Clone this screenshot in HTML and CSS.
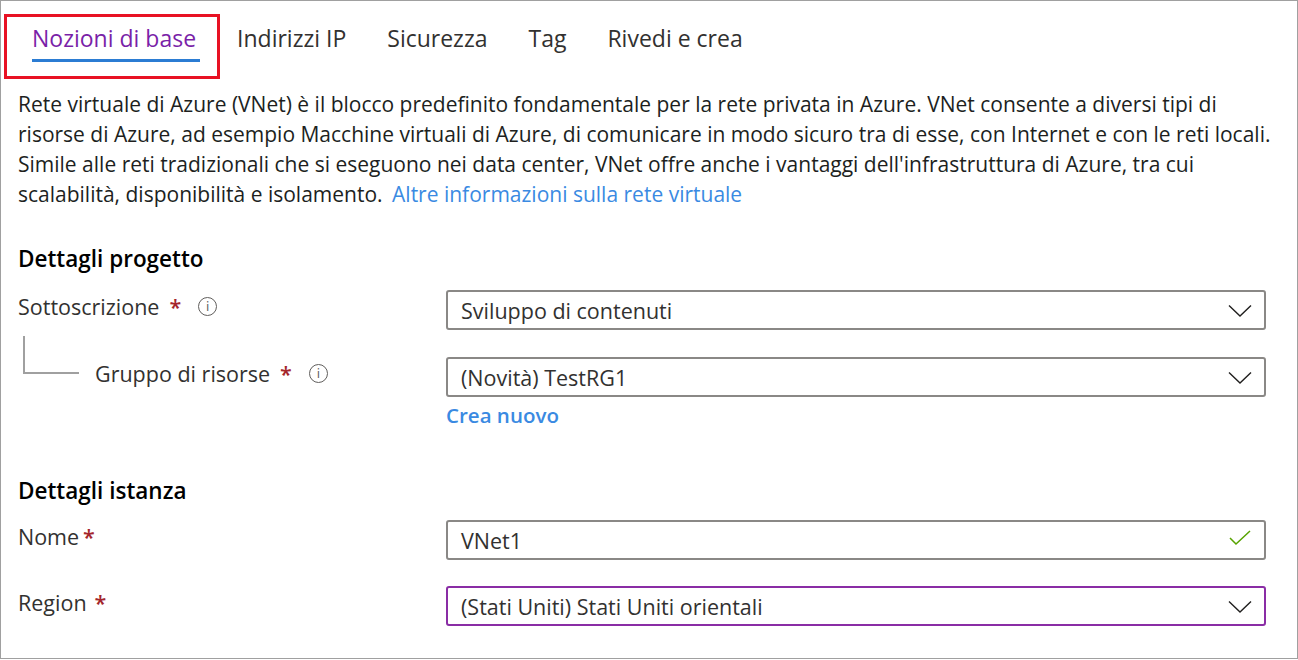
FILE: index.html
```html
<!DOCTYPE html>
<html lang="it">
<head>
<meta charset="utf-8">
<title>Crea rete virtuale</title>
<link rel="stylesheet" href="styles.css">
</head>
<body>
<div class="frame">
  <nav class="tabs">
    <div class="tab active">Nozioni di base</div>
    <div class="tab">Indirizzi IP</div>
    <div class="tab">Sicurezza</div>
    <div class="tab">Tag</div>
    <div class="tab">Rivedi e crea</div>
  </nav>

  <p class="intro">Rete virtuale di Azure (VNet) è il blocco predefinito fondamentale per la rete privata in Azure. VNet consente a diversi tipi di<br>risorse di Azure, ad esempio Macchine virtuali di Azure, di comunicare in modo sicuro tra di esse, con Internet e con le reti locali.<br>Simile alle reti tradizionali che si eseguono nei data center, VNet offre anche i vantaggi dell'infrastruttura di Azure, tra cui<br>scalabilità, disponibilità e isolamento. <a class="link">Altre informazioni sulla rete virtuale</a></p>

  <h2 class="section">Dettagli progetto</h2>

  <div class="row row-sub">
    <div class="label">Sottoscrizione<span class="req">*</span><span class="info">i</span></div>
    <div class="control">
      <div class="select"><span>Sviluppo di contenuti</span>
        <svg class="chev" width="24" height="14" viewBox="0 0 24 14"><path d="M1 1.5 L12 12 L23 1.5" fill="none" stroke="#201f1e" stroke-width="1.4"/></svg>
      </div>
    </div>
  </div>

  <div class="row row-rg">
    <div class="label nested"><span class="tree"></span>Gruppo di risorse<span class="req">*</span><span class="info">i</span></div>
    <div class="control">
      <div class="select"><span>(Novità) TestRG1</span>
        <svg class="chev" width="24" height="14" viewBox="0 0 24 14"><path d="M1 1.5 L12 12 L23 1.5" fill="none" stroke="#201f1e" stroke-width="1.4"/></svg>
      </div>
      <a class="create">Crea nuovo</a>
    </div>
  </div>

  <h2 class="section section-inst">Dettagli istanza</h2>

  <div class="row row-name">
    <div class="label">Nome<span class="req tight">*</span></div>
    <div class="control">
      <div class="select"><span>VNet1</span>
        <svg class="check" width="22" height="16" viewBox="0 0 22 16"><path d="M1 8 L7 14 L21 1" fill="none" stroke="#57a300" stroke-width="1.5"/></svg>
      </div>
    </div>
  </div>

  <div class="row row-region">
    <div class="label">Region<span class="req mid">*</span></div>
    <div class="control">
      <div class="select focused"><span>(Stati Uniti) Stati Uniti orientali</span>
        <svg class="chev" width="24" height="14" viewBox="0 0 24 14"><path d="M1 1.5 L12 12 L23 1.5" fill="none" stroke="#201f1e" stroke-width="1.4"/></svg>
      </div>
    </div>
  </div>
</div>
</body>
</html>
```

FILE: styles.css
```css
* { box-sizing: border-box; }
html, body { margin: 0; padding: 0; background: #fff; }
body { font-family: "Open Sans", "Noto Sans", sans-serif; color: #323130; }

.frame {
  width: 1298px;
  height: 659px;
  border: 1px solid #a0a0a0;
  padding: 0 0 0 17px;
  overflow: hidden;
}

.tabs {
  display: flex;
  gap: 41px;
  padding: 22px 0 0 14px;
  height: 63px;
}
.tab {
  position: relative;
  font-size: 23px;
  line-height: 30px;
  height: 39px;
  color: #323130;
  white-space: nowrap;
}
.tab.active {
  color: #7a1fa8;
  border-bottom: 3px solid #2b7cd3;
  padding-right: 4px;
  margin-right: -4px;
}
.tab.active::after {
  content: "";
  position: absolute;
  left: -28px;
  right: -20px;
  top: -9px;
  bottom: -20px;
  border: 3px solid #e81123;
}

.intro {
  margin: 25px 0 0 0;
  font-size: 21px;
  line-height: 30px;
  white-space: nowrap;
  color: #201f1e;
}
.link { color: #3a8ae2; margin-left: 4px; }

.section {
  margin: 37px 0 0 0;
  font-size: 22.5px;
  font-weight: 600;
  line-height: 26px;
  color: #000;
}
.section-inst { margin-top: 48px; }

.row {
  display: grid;
  grid-template-columns: 428px 820px;
  align-items: start;
}
.row-sub { margin-top: 18px; }
.row-rg { margin-top: 27px; }
.row-name { margin-top: 16px; }
.row-region { margin-top: 26px; }

.label {
  font-size: 21.5px;
  line-height: 33px;
  height: 33px;
  color: #323130;
  display: flex;
  align-items: center;
  white-space: nowrap;
}
.label.nested { position: relative; padding-left: 77px; }
.tree {
  position: absolute;
  left: 5px;
  top: -21px;
  width: 56px;
  height: 38px;
  border-left: 2px solid #a0a0a0;
  border-bottom: 2px solid #a0a0a0;
}
.req { color: #a4262c; font-weight: 600; margin-left: 10px; }
.req.tight { margin-left: 4px; }
.req.mid { margin-left: 8px; }
.info {
  display: inline-flex;
  align-items: center;
  justify-content: center;
  width: 19px;
  height: 19px;
  margin-left: 17px;
  border: 1.3px solid #605e5c;
  border-radius: 50%;
  font-size: 12px;
  line-height: 1;
  color: #605e5c;
  font-family: "DejaVu Sans", sans-serif;
}

.select {
  height: 40px;
  border: 2px solid #8a8886;
  border-radius: 3px;
  display: flex;
  align-items: center;
  justify-content: space-between;
  padding: 0 12px 0 13px;
  font-size: 21.5px;
  color: #323130;
}
.select.focused { border-color: #8a2da5; }
.chev { display: block; margin-top: 2px; }
.check { display: block; margin-right: 1px; margin-top: -4px; }

.create {
  display: block;
  margin-top: 3px;
  font-size: 20.5px;
  font-weight: 600;
  line-height: 30px;
  color: #3a8ae2;
}
```
